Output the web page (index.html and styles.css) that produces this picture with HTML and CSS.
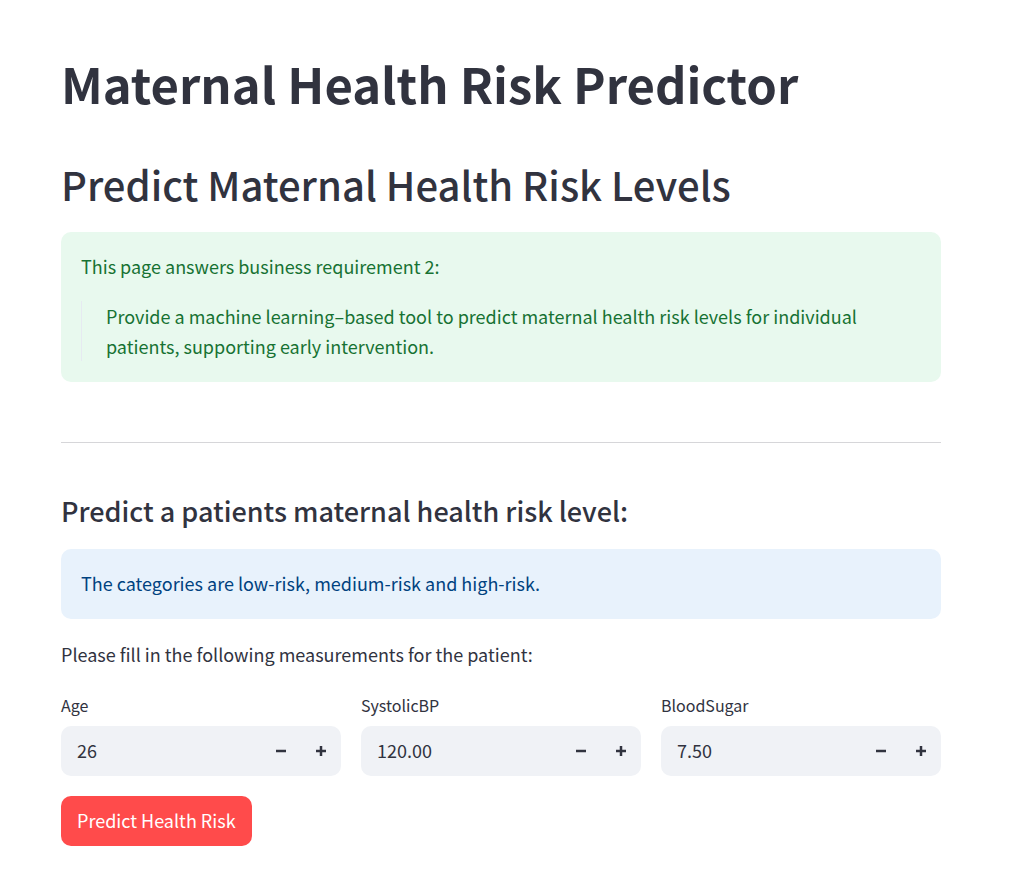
FILE: index.html
```html
<!DOCTYPE html>
<html lang="en">
<head>
<meta charset="utf-8">
<meta name="viewport" content="width=device-width, initial-scale=1">
<title>Maternal Health Risk Predictor</title>
<link rel="stylesheet" href="styles.css">
</head>
<body>
<main class="page">
  <h1 class="title">Maternal Health Risk Predictor</h1>
  <h2 class="heading">Predict Maternal Health Risk Levels</h2>
  <section class="alert alert-success">
    <p class="alert-text">This page answers business requirement 2:</p>
    <blockquote class="quote">Provide a machine learning–based tool to predict maternal health risk levels for individual patients, supporting early intervention.</blockquote>
  </section>
  <hr class="divider">
  <h3 class="subheading">Predict a patients maternal health risk level:</h3>
  <section class="alert alert-info">
    <p class="alert-text">The categories are low-risk, medium-risk and high-risk.</p>
  </section>
  <p class="intro">Please fill in the following measurements for the patient:</p>
  <form class="form">
    <div class="fields">
      <div class="field">
        <label class="label" for="age">Age</label>
        <div class="number">
          <input class="number-input" id="age" type="text" inputmode="numeric" value="26">
          <button class="step" type="button" aria-label="Decrease Age"><svg class="icon" viewBox="0 0 8 8"><path d="M0 3v2h8V3H0z"/></svg></button>
          <button class="step" type="button" aria-label="Increase Age"><svg class="icon" viewBox="0 0 8 8"><path d="M3 0v3H0v2h3v3h2V5h3V3H5V0H3z"/></svg></button>
        </div>
      </div>
      <div class="field">
        <label class="label" for="systolic">SystolicBP</label>
        <div class="number">
          <input class="number-input" id="systolic" type="text" inputmode="decimal" value="120.00">
          <button class="step" type="button" aria-label="Decrease SystolicBP"><svg class="icon" viewBox="0 0 8 8"><path d="M0 3v2h8V3H0z"/></svg></button>
          <button class="step" type="button" aria-label="Increase SystolicBP"><svg class="icon" viewBox="0 0 8 8"><path d="M3 0v3H0v2h3v3h2V5h3V3H5V0H3z"/></svg></button>
        </div>
      </div>
      <div class="field">
        <label class="label" for="sugar">BloodSugar</label>
        <div class="number">
          <input class="number-input" id="sugar" type="text" inputmode="decimal" value="7.50">
          <button class="step" type="button" aria-label="Decrease BloodSugar"><svg class="icon" viewBox="0 0 8 8"><path d="M0 3v2h8V3H0z"/></svg></button>
          <button class="step" type="button" aria-label="Increase BloodSugar"><svg class="icon" viewBox="0 0 8 8"><path d="M3 0v3H0v2h3v3h2V5h3V3H5V0H3z"/></svg></button>
        </div>
      </div>
    </div>
    <button class="submit" type="button">Predict Health Risk</button>
  </form>
</main>
</body>
</html>
```

FILE: styles.css
```css
* { box-sizing: border-box; }
body {
  margin: 0;
  background: #fff;
  color: #31333f;
  font-family: "Noto Sans CJK SC", "Noto Sans", sans-serif;
  font-size: 18px;
  line-height: 30px;
}
h1, h2, h3, p, blockquote { margin: 0; }
.page { padding: 50px 84px 40px 61px; }
.title { font-size: 49px; line-height: 66px; font-weight: 700; }
.heading { margin-top: 42px; font-size: 40px; line-height: 52px; font-weight: 500; }
.subheading { font-size: 27px; line-height: 36px; font-weight: 500; }
.alert { padding: 19px 20px 21px; border-radius: 10px; }
.alert-success { margin-top: 22px; background: #e8f9ee; color: #177233; }
.alert-info { margin-top: 20px; background: #e8f2fc; color: #004280; }
.quote {
  margin-top: 20px;
  padding-left: 24px;
  border-left: 1px solid #e6eaf1;
}
.divider {
  margin: 60px 0 50px;
  border: 0;
  border-top: 1px solid #d6d6d9;
}
.intro { margin-top: 20px; }
.form { margin-top: 21px; }
.fields {
  display: grid;
  grid-template-columns: repeat(3, minmax(0, 1fr));
  gap: 20px;
}
.label { display: block; margin-bottom: 6px; font-size: 16px; line-height: 30px; }
.number {
  display: flex;
  height: 50px;
  border-radius: 10px;
  background: #f0f2f6;
  overflow: hidden;
}
.number-input {
  flex: 1;
  min-width: 0;
  padding: 0 16px 2px;
  border: 0;
  background: transparent;
  color: inherit;
  font: inherit;
}
.step {
  display: flex;
  flex: none;
  align-items: center;
  justify-content: center;
  width: 40px;
  padding: 0;
  border: 0;
  background: transparent;
  color: inherit;
}
.icon { width: 10px; height: 10px; fill: currentColor; }
.submit {
  margin-top: 20px;
  height: 50px;
  padding: 0 16px 2px;
  border: 0;
  border-radius: 10px;
  background: #ff4b4b;
  color: #fff;
  font: inherit;
}
```
